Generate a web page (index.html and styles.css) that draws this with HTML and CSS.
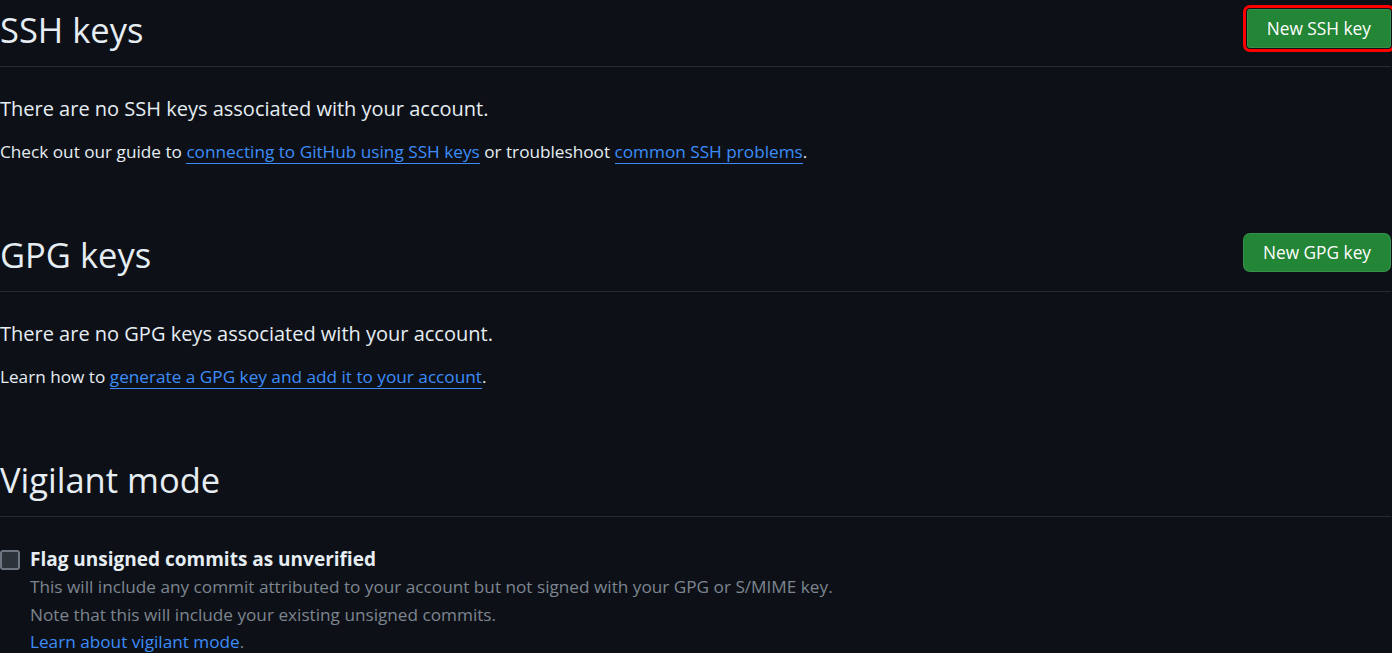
FILE: index.html
```html
<!DOCTYPE html>
<html lang="en">
<head>
    <meta charset="UTF-8">
    <title>SSH and GPG keys</title>
    <link rel="stylesheet" href="styles.css">
</head>
<body>
    <div class="settings">
        <div class="subhead">
            <h2>SSH keys</h2>
            <a class="btn btn-marked" href="#">New SSH key</a>
        </div>
        <p class="lead">There are no SSH keys associated with your account.</p>
        <p>Check out our guide to <a class="link" href="#">connecting to GitHub using SSH keys</a> or troubleshoot <a class="link" href="#">common SSH problems</a>.</p>

        <div class="subhead spaced">
            <h2>GPG keys</h2>
            <a class="btn" href="#">New GPG key</a>
        </div>
        <p class="lead">There are no GPG keys associated with your account.</p>
        <p>Learn how to <a class="link" href="#">generate a GPG key and add it to your account</a>.</p>

        <div class="subhead spaced">
            <h2>Vigilant mode</h2>
        </div>
        <div class="check">
            <span class="box"></span>
            <div>
                <label>Flag unsigned commits as unverified</label>
                <p class="note">This will include any commit attributed to your account but not signed with your GPG or S/MIME key.</p>
                <p class="note">Note that this will include your existing unsigned commits.</p>
                <p class="note"><a class="link" href="#">Learn about vigilant mode</a>.</p>
            </div>
        </div>
    </div>
</body>
</html>
```

FILE: styles.css
```css
* {
    margin: 0;
    padding: 0;
    box-sizing: border-box;
}

body {
    background: #0d1117;
    color: #e6edf3;
    font-family: "Open Sans", "Noto Sans", sans-serif;
    font-size: 17.2px;
    overflow: hidden;
}

.settings {
    width: 1392px;
    padding-right: 1px;
}

.subhead {
    display: flex;
    align-items: center;
    justify-content: space-between;
    height: 67px;
    border-bottom: 1px solid #272b33;
    margin-bottom: 28px;
}

.subhead.spaced {
    margin-top: 54px;
    height: 72px;
    padding-top: 5px;
}

.subhead h2 {
    font-weight: 400;
    font-size: 34.5px;
    line-height: 1;
    margin-top: -6px;
}

.btn {
    display: inline-block;
    background: #238636;
    color: #fff;
    text-decoration: none;
    font-size: 17.3px;
    line-height: 37px;
    height: 39px;
    padding: 0 19px;
    border-radius: 7px;
    border: 1px solid rgba(240, 246, 252, 0.1);
    margin-top: -12px;
}

.btn-marked {
    outline: 3px solid #ff0000;
    outline-offset: 1px;
    border-radius: 3px;
    margin-top: -10px;
}

p {
    line-height: 28px;
    margin-bottom: 16px;
}

.lead {
    font-size: 20px;
    margin-bottom: 15px;
}

.link {
    color: #3c8cfa;
    text-decoration: none;
    border-bottom: 1px solid #3c8cfa;
}

.check {
    display: flex;
    gap: 10px;
    margin-top: 6px;
}

.box {
    flex: none;
    width: 20px;
    height: 20px;
    border: 2px solid #6e7681;
    border-radius: 3px;
    background: #2d333b;
    margin-top: 5px;
}

.check label {
    display: block;
    font-weight: 700;
    font-size: 19px;
    line-height: 28px;
}

.note {
    color: #7d8590;
    font-size: 17.2px;
    line-height: 27.5px;
    margin-bottom: 0;
}
```
